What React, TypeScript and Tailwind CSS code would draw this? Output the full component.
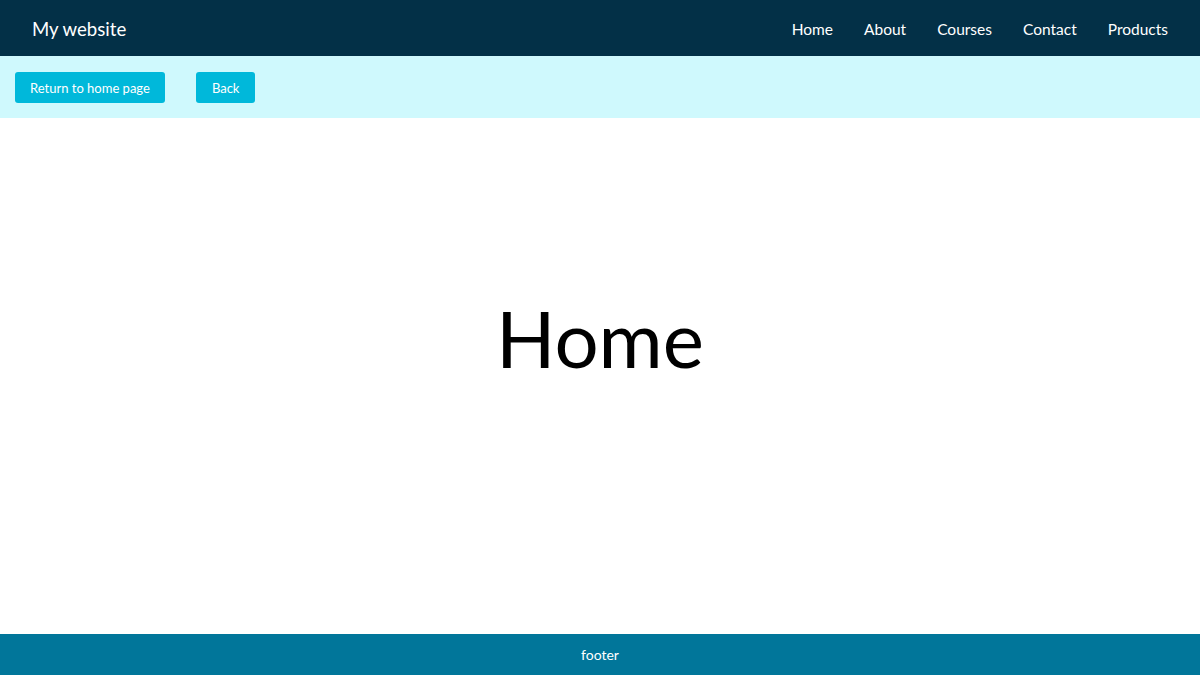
import React from "react";

export default function App() {
  const nav = ["Home", "About", "Courses", "Contact", "Products"];
  return (
    <div
      className="flex min-h-screen flex-col bg-white"
      style={{ fontFamily: 'Lato, "Noto Sans", sans-serif' }}
    >
      <header className="flex h-[56px] items-center justify-between bg-[#033047] pl-[32px] pr-[32px] pt-[3px] text-white">
        <div className="text-[18.6px]">My website</div>
        <nav className="flex gap-[31px] text-[15.5px]">
          {nav.map((n) => (
            <a key={n} className="cursor-pointer">
              {n}
            </a>
          ))}
        </nav>
      </header>
      <div className="flex h-[62px] items-center gap-[31px] bg-[#cff9fd] px-[15px]">
        <button className="h-[31px] rounded-[3px] bg-[#00b8da] px-[15px] pt-[3px] text-[13px] text-white">
          Return to home page
        </button>
        <button className="h-[31px] rounded-[3px] bg-[#00b8da] px-[16px] pt-[3px] text-[13px] text-white">
          Back
        </button>
      </div>
      <main className="flex flex-1 items-center justify-center pb-[76px]">
        <h1 className="text-[78px] leading-none text-black">Home</h1>
      </main>
      <footer className="flex h-[41px] items-center justify-center bg-[#01769a] text-[14px] text-white">
        footer
      </footer>
    </div>
  );
}
